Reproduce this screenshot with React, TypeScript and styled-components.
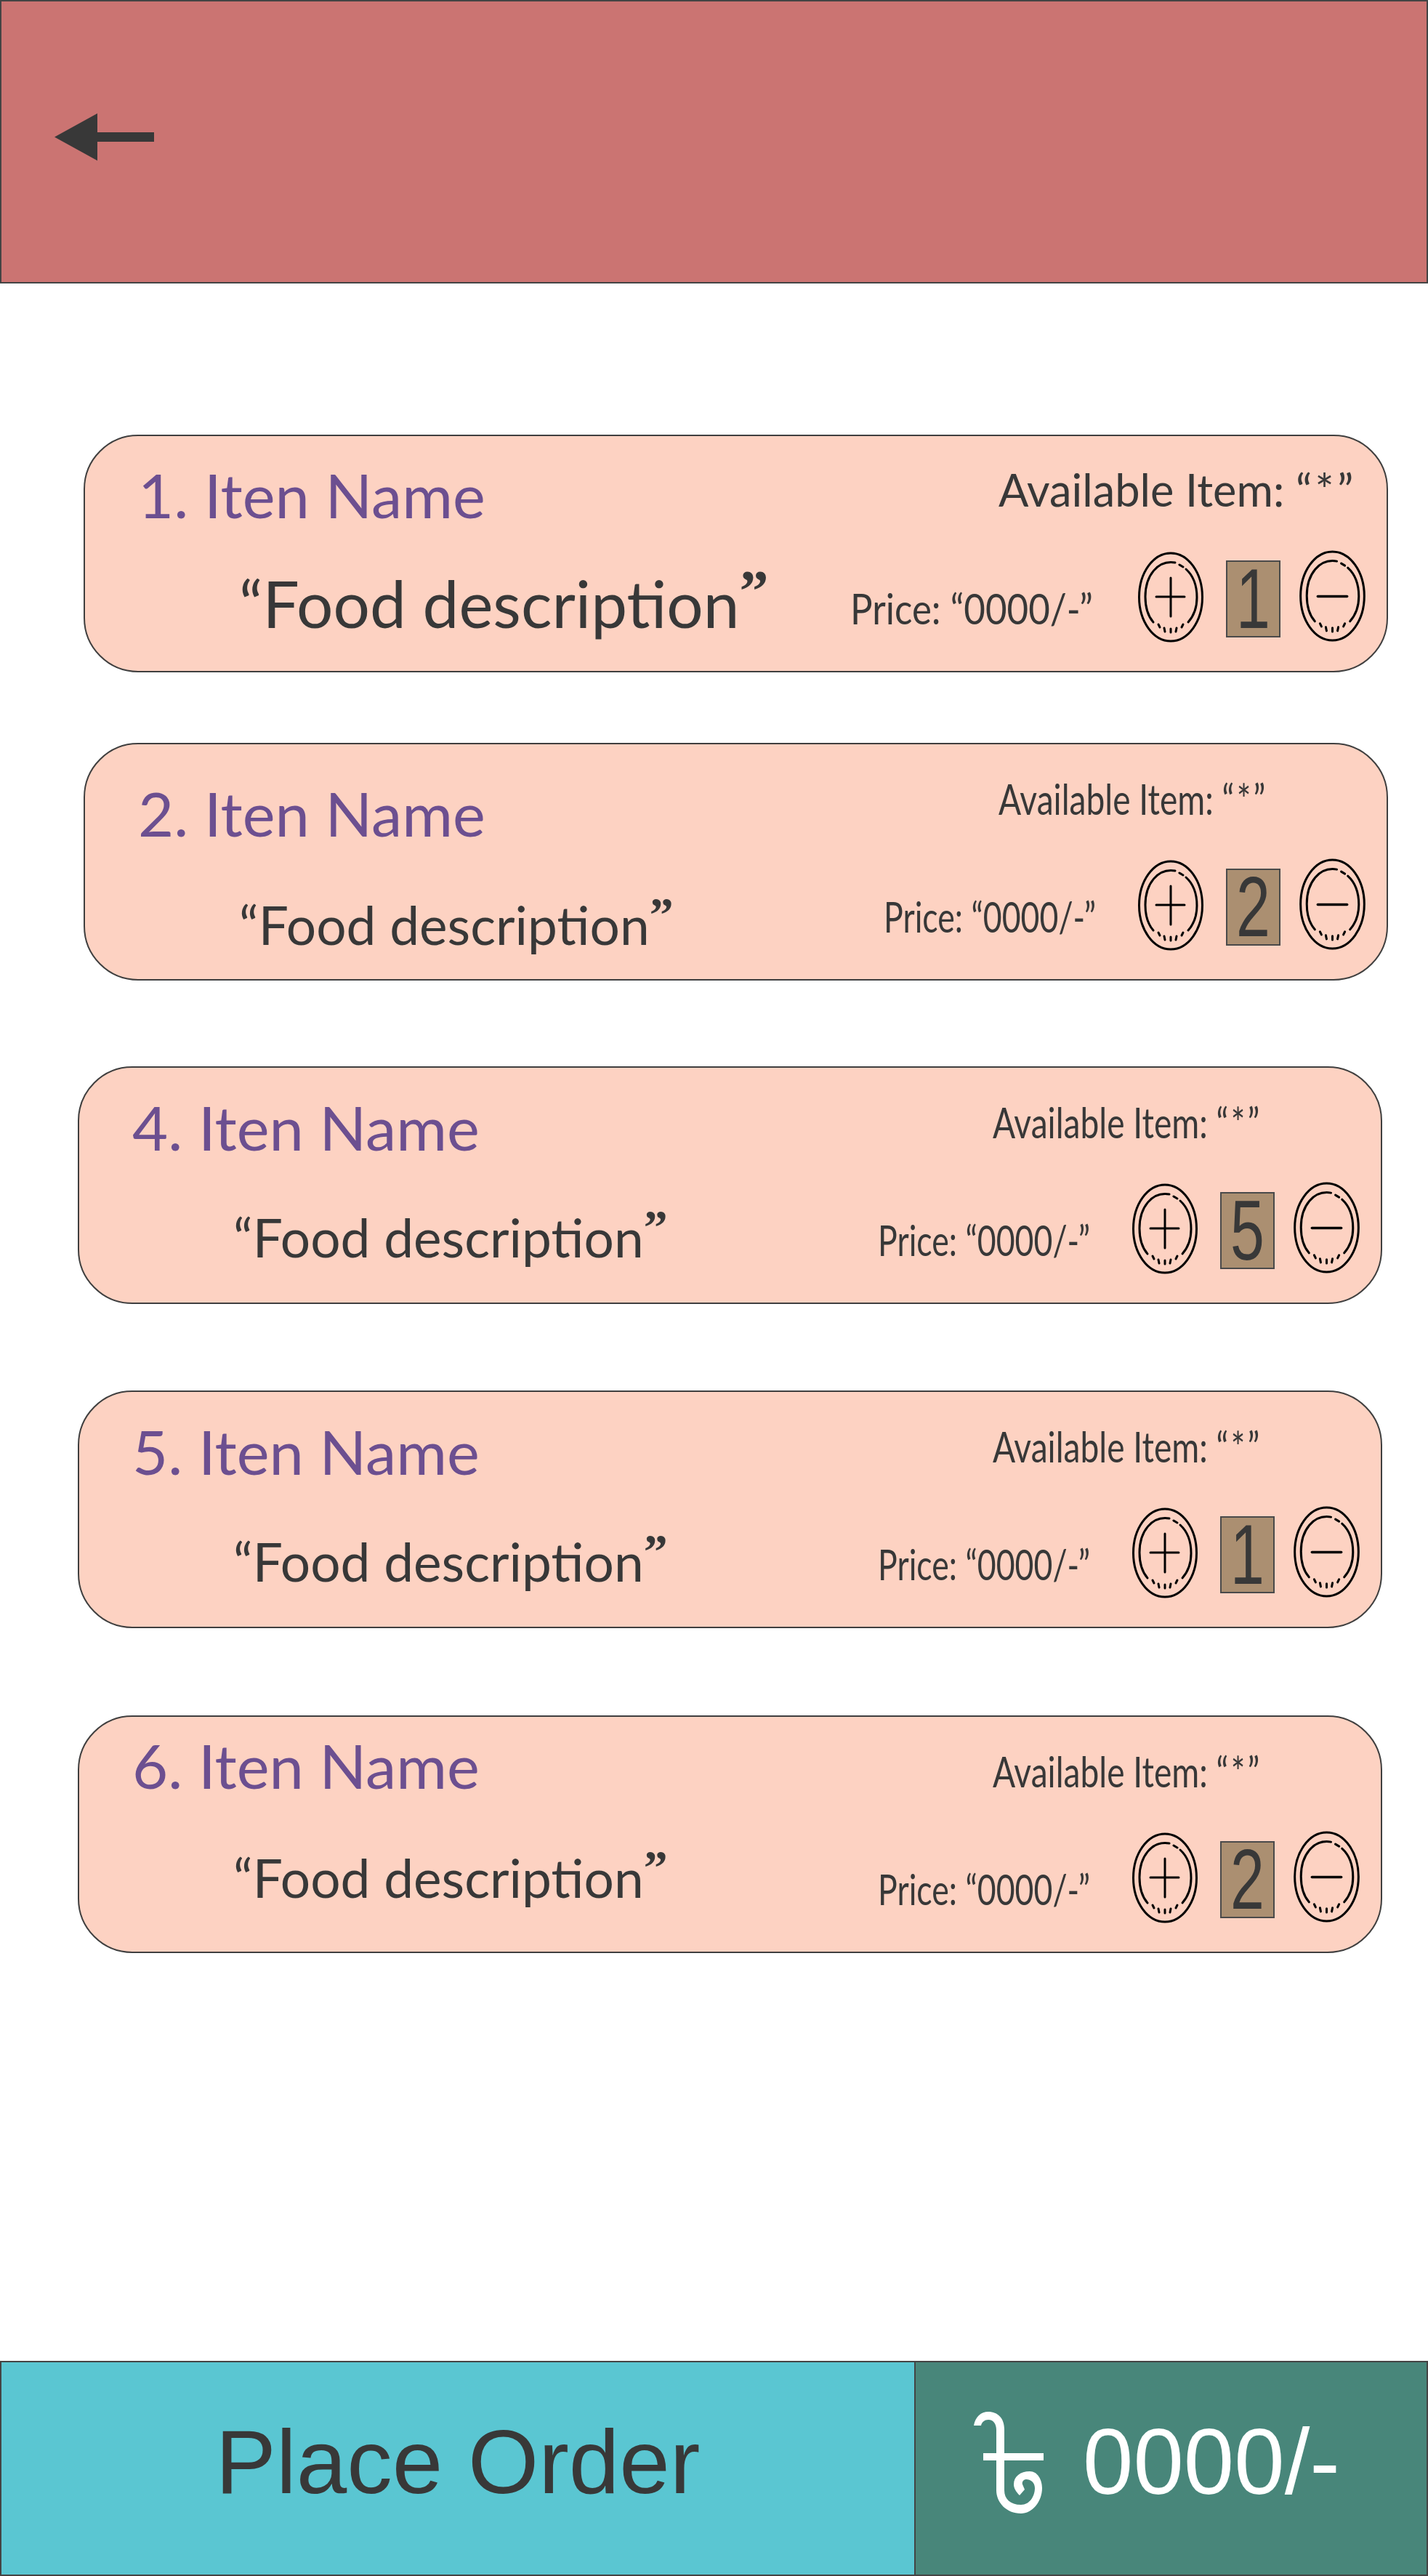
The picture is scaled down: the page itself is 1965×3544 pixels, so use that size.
import React from "react";
import styled, { createGlobalStyle } from "styled-components";

const Global = createGlobalStyle`
  html, body { margin: 0; padding: 0; background: #fff; }
  #root { width: 1965px; height: 3544px; }
`;

const Page = styled.div`
  width: 1965px; height: 3544px; display: flex; flex-direction: column;
  overflow: hidden; color: #383838; font-family: Lato, "Open Sans", sans-serif;
`;
const Header = styled.header`
  height: 390px; box-sizing: border-box; flex: none; background: #cb7472;
  border: 2px solid #444; display: flex; align-items: flex-start; padding: 154px 0 0 73px;
`;
const List = styled.main`flex: 1; display: flex; flex-direction: column;`;
const Card = styled.section<{ $left: number; $top: number }>`
  box-sizing: border-box; width: 1795px; height: 327px; flex: none;
  margin: ${(p) => p.$top}px 0 0 ${(p) => p.$left}px;
  background: #fdd2c2; border: 2px solid #3f3f3f; border-radius: 75px;
  display: flex; flex-direction: column;
`;
const TopRow = styled.div`
  height: 122px; flex: none; display: flex; align-items: flex-end;
  justify-content: space-between; padding-left: 73px;
`;
const Name = styled.h2<{ $drop: number }>`
  margin: 0; font-size: 84px; line-height: 96px; font-weight: 400; color: #6c4f90; white-space: nowrap;
  transform: translateY(${(p) => p.$drop}px) scaleX(1.01); transform-origin: left center;
`;
const Avail = styled.div<{ $size: number; $squeeze: number }>`
  width: 534px; font-size: ${(p) => p.$size}px; line-height: 1; white-space: nowrap;
  transform: translateY(-18px) scaleX(${(p) => p.$squeeze}); transform-origin: left center;
`;
const Stock = styled.span`letter-spacing: 0.07em;`;
const BottomRow = styled.div`flex: 1; display: flex; align-items: center; padding-left: 212px;`;
const Desc = styled.div<{ $size: number; $width: number; $drop: number }>`
  width: ${(p) => p.$width}px; flex: none; font-size: ${(p) => p.$size}px; line-height: 1; white-space: nowrap;
  font-variant-ligatures: common-ligatures; transform: translateY(${(p) => p.$drop}px);
`;
const Close = styled.span`
  font-family: "Liberation Serif", serif; font-weight: 700; font-size: 0.9em; line-height: 0; vertical-align: 0.3em;
`;
const Price = styled.div<{ $width: number; $squeeze: number }>`
  width: ${(p) => p.$width}px; flex: none; font-size: 58px; line-height: 1; white-space: nowrap;
  transform: translateY(14px) scaleX(${(p) => p.$squeeze}); transform-origin: left center;
`;
const Stepper = styled.div`
  display: flex; align-items: flex-start; flex: none; align-self: flex-end;
  margin: 0 28px 39px auto;
`;
const RoundButton = styled.button<{ $w: number; $h: number; $offset: number }>`
  all: unset; display: block; flex: none;
  width: ${(p) => p.$w}px; height: ${(p) => p.$h}px; margin-top: ${(p) => p.$offset}px;
`;
const Qty = styled.div`
  width: 75px; height: 106px; box-sizing: border-box; background: #ab8f71; border: 2px solid #4a4a4a;
  display: flex; align-items: center; justify-content: center; flex: none; margin: 14px 26px 0 30px;
  font: 400 117px/100px "Liberation Sans", sans-serif; color: #383838;
`;
const QtyDigit = styled.span`display: block; transform: scaleX(0.72);`;
const Footer = styled.footer`height: 296px; flex: none; display: flex; box-sizing: border-box;`;
const OrderButton = styled.button`
  all: unset; box-sizing: border-box; width: 1258px; height: 296px; background: #5ac6d2;
  border: 2px solid #444; border-right: 0; text-align: center; padding-bottom: 18px;
  font: 400 125px/1.1 "Liberation Sans", sans-serif; color: #383838;
`;
const Total = styled.div`
  flex: 1; box-sizing: border-box; background: #48867a; border: 2px solid #444;
  display: flex; align-items: flex-start; padding: 68px 0 0 80px; gap: 54px;
`;
const TakaSvg = styled.svg`flex: none; display: block;`;
const Amount = styled.span`
  font: 400 128px/1 "Liberation Sans", sans-serif; color: #fff; margin-top: 5px;
  transform: scaleX(0.975); transform-origin: left center; white-space: nowrap;
`;

const Ring = () => (
  <g fill="none" stroke="#000" strokeWidth="3" strokeLinecap="round">
    <ellipse cx="45" cy="62.5" rx="43.5" ry="60.5" />
    <path d="M51 15C27 11 10 33 10 62c0 15 4 27 11 35" />
    <path d="M57 18l5 3" />
    <path d="M66 24c10 9 15 23 15 39 0 14-4 25-12 34" />
    <path d="M28 100l2 4M36 105l1 5M45 106v5M53 105l-1 5M62 100l-2 4" />
  </g>
);
const Plus = () => (
  <svg width="91" height="125" viewBox="0 0 91 125" style={{ display: "block" }}>
    <Ring />
    <path d="M45 36v53M25 62h39" stroke="#000" strokeWidth="3" fill="none" strokeLinecap="round" />
  </svg>
);
const Minus = () => (
  <svg width="92" height="126" viewBox="0 0 91 125" style={{ display: "block" }}>
    <Ring />
    <path d="M25 63h40" stroke="#000" strokeWidth="3.5" fill="none" strokeLinecap="round" />
  </svg>
);
const Arrow = () => (
  <svg width="137" height="65" viewBox="0 0 137 65" style={{ display: "block" }}>
    <path d="M0 32.5L59 0v26h78v13H59v26z" fill="#383838" />
  </svg>
);
const Taka = () => (
  <TakaSvg width="96" height="141" viewBox="0 0 96 141">
    <path
      fill="#fff"
      d="M0 19C2 7 10 0 20 0C33 0 42 9 42 24V108C42 120 50 128 65 128C77 128 84 116 84 105C84 97 78 93 72 93C68 93 66 97 67 100L70 107L63 115C58 110 55 105 55 100C55 89 64 82 77 82C88 82 94 94 94 105C94 124 80 140 65 140C45 140 31 125 31 108V25C31 17 27 11 20 11C15 11 11 14 10 19Z"
    />
    <path fill="#fff" d="M13 57H96V67H13Z" />
  </TakaSvg>
);

type Item = { n: number; q: number; left: number; top: number; big?: boolean; nameDrop: number; descDrop: number };
const items: Item[] = [
  { n: 1, q: 1, left: 115, top: 208, big: true, nameDrop: 7, descDrop: 7 },
  { n: 2, q: 2, left: 115, top: 97, nameDrop: 21, descDrop: 26 },
  { n: 4, q: 5, left: 107, top: 118, nameDrop: 8, descDrop: 11 },
  { n: 5, q: 1, left: 107, top: 119, nameDrop: 8, descDrop: 11 },
  { n: 6, q: 2, left: 107, top: 120, nameDrop: -7, descDrop: -1 },
];

export default function App() {
  return (
    <Page>
      <Global />
      <Header><Arrow /></Header>
      <List>
        {items.map((it) => (
          <Card key={it.n} $left={it.left} $top={it.top}>
            <TopRow>
              <Name $drop={it.nameDrop}>{it.n}. Iten Name</Name>
              <Avail $size={it.big ? 61 : 58} $squeeze={it.big ? 1.005 : 0.795}>
                Available Item: <Stock>“*”</Stock>
              </Avail>
            </TopRow>
            <BottomRow>
              <Desc $size={it.big ? 89 : 73} $width={it.big ? 841 : 887} $drop={it.descDrop}>
                “Food description<Close>”</Close>
              </Desc>
              <Price $width={340} $squeeze={it.big ? 0.88 : 0.77}>Price: “0000/-”</Price>
              <Stepper>
                <RoundButton $w={91} $h={125} $offset={2} aria-label="add"><Plus /></RoundButton>
                <Qty><QtyDigit>{it.q}</QtyDigit></Qty>
                <RoundButton $w={92} $h={126} $offset={0} aria-label="remove"><Minus /></RoundButton>
              </Stepper>
            </BottomRow>
          </Card>
        ))}
      </List>
      <Footer>
        <OrderButton>Place Order</OrderButton>
        <Total><Taka /><Amount>0000/-</Amount></Total>
      </Footer>
    </Page>
  );
}
